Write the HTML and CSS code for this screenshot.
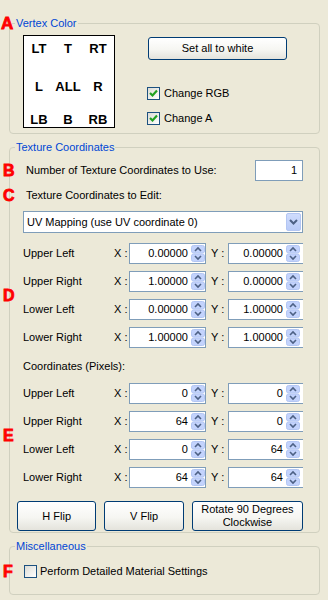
FILE: index.html
```html
<!DOCTYPE html>
<html lang="en">
<head>
    <meta charset="UTF-8">
    <meta name="viewport" content="width=device-width, initial-scale=1.0">
    <title>Material Settings</title>
    <link rel="stylesheet" href="styles.css">
</head>
<body>
    <!-- Shared icons -->
    <svg class="defs" width="0" height="0">
        <symbol id="spin" viewBox="0 0 14 17">
            <rect x="0.5" y="0.5" width="13" height="7.5" rx="2" fill="#c3d3fc" stroke="#b3c6f3"/>
            <rect x="0.5" y="9" width="13" height="7.5" rx="2" fill="#c3d3fc" stroke="#b3c6f3"/>
            <path d="M4 6 L7 3 L10 6" fill="none" stroke="#4d6185" stroke-width="1.6"/>
            <path d="M4 11 L7 14 L10 11" fill="none" stroke="#4d6185" stroke-width="1.6"/>
        </symbol>
        <symbol id="tick" viewBox="0 0 11 11">
            <path d="M2 5 L4.5 7.5 L9 2.5" fill="none" stroke="#21a121" stroke-width="2.2"/>
        </symbol>
    </svg>

    <!-- Vertex Color -->
    <fieldset class="group">
        <legend><span class="marker marker-a">A</span>Vertex Color</legend>
        <div class="vertex-body">
            <div class="corner-grid">
                <span>LT</span><span>T</span><span>RT</span>
                <span>L</span><span>ALL</span><span>R</span>
                <span>LB</span><span>B</span><span>RB</span>
            </div>
            <div class="vertex-side">
                <button class="btn btn-white">Set all to white</button>
                <label class="check check-rgb"><span class="box"><svg><use href="#tick"/></svg></span>Change RGB</label>
                <label class="check check-a"><span class="box"><svg><use href="#tick"/></svg></span>Change A</label>
            </div>
        </div>
    </fieldset>

    <!-- Texture Coordinates -->
    <fieldset class="group group-tex">
        <legend>Texture Coordinates</legend>
        <div class="tex-body">
            <div class="field-row">
                <span class="marker marker-row">B</span>
                <span>Number of Texture Coordinates to Use:</span>
                <span class="num-input">1</span>
            </div>
            <div class="field-row edit-row">
                <span class="marker marker-row">C</span>
                <span>Texture Coordinates to Edit:</span>
            </div>
            <div class="select">
                <span>UV Mapping (use UV coordinate 0)</span>
                <span class="select-btn">
                    <svg width="9" height="6" viewBox="0 0 9 6"><path d="M1 1 L4.5 4.5 L8 1" fill="none" stroke="#4d6185" stroke-width="2"/></svg>
                </span>
            </div>

            <div class="coord-block">
                <span class="marker marker-row">D</span>
                <div class="coord-row">
                    <span class="coord-name">Upper Left</span>
                    <span class="axis">X :</span>
                    <div class="spin"><span class="spin-val">0.00000</span><svg class="spin-ico"><use href="#spin"/></svg></div>
                    <span class="axis axis-y">Y :</span>
                    <div class="spin spin-y"><span class="spin-val">0.00000</span><svg class="spin-ico"><use href="#spin"/></svg></div>
                </div>
                <div class="coord-row">
                    <span class="coord-name">Upper Right</span>
                    <span class="axis">X :</span>
                    <div class="spin"><span class="spin-val">1.00000</span><svg class="spin-ico"><use href="#spin"/></svg></div>
                    <span class="axis axis-y">Y :</span>
                    <div class="spin spin-y"><span class="spin-val">0.00000</span><svg class="spin-ico"><use href="#spin"/></svg></div>
                </div>
                <div class="coord-row">
                    <span class="coord-name">Lower Left</span>
                    <span class="axis">X :</span>
                    <div class="spin"><span class="spin-val">0.00000</span><svg class="spin-ico"><use href="#spin"/></svg></div>
                    <span class="axis axis-y">Y :</span>
                    <div class="spin spin-y"><span class="spin-val">1.00000</span><svg class="spin-ico"><use href="#spin"/></svg></div>
                </div>
                <div class="coord-row">
                    <span class="coord-name">Lower Right</span>
                    <span class="axis">X :</span>
                    <div class="spin"><span class="spin-val">1.00000</span><svg class="spin-ico"><use href="#spin"/></svg></div>
                    <span class="axis axis-y">Y :</span>
                    <div class="spin spin-y"><span class="spin-val">1.00000</span><svg class="spin-ico"><use href="#spin"/></svg></div>
                </div>
            </div>

            <div class="pixels-title">Coordinates (Pixels):</div>

            <div class="coord-block coord-block-px">
                <span class="marker marker-row">E</span>
                <div class="coord-row">
                    <span class="coord-name">Upper Left</span>
                    <span class="axis">X :</span>
                    <div class="spin"><span class="spin-val">0</span><svg class="spin-ico"><use href="#spin"/></svg></div>
                    <span class="axis axis-y">Y :</span>
                    <div class="spin spin-y"><span class="spin-val">0</span><svg class="spin-ico"><use href="#spin"/></svg></div>
                </div>
                <div class="coord-row">
                    <span class="coord-name">Upper Right</span>
                    <span class="axis">X :</span>
                    <div class="spin"><span class="spin-val">64</span><svg class="spin-ico"><use href="#spin"/></svg></div>
                    <span class="axis axis-y">Y :</span>
                    <div class="spin spin-y"><span class="spin-val">0</span><svg class="spin-ico"><use href="#spin"/></svg></div>
                </div>
                <div class="coord-row">
                    <span class="coord-name">Lower Left</span>
                    <span class="axis">X :</span>
                    <div class="spin"><span class="spin-val">0</span><svg class="spin-ico"><use href="#spin"/></svg></div>
                    <span class="axis axis-y">Y :</span>
                    <div class="spin spin-y"><span class="spin-val">64</span><svg class="spin-ico"><use href="#spin"/></svg></div>
                </div>
                <div class="coord-row">
                    <span class="coord-name">Lower Right</span>
                    <span class="axis">X :</span>
                    <div class="spin"><span class="spin-val">64</span><svg class="spin-ico"><use href="#spin"/></svg></div>
                    <span class="axis axis-y">Y :</span>
                    <div class="spin spin-y"><span class="spin-val">64</span><svg class="spin-ico"><use href="#spin"/></svg></div>
                </div>
            </div>

            <div class="btn-row">
                <button class="btn btn-flip">H Flip</button>
                <button class="btn btn-flip">V Flip</button>
                <button class="btn btn-rotate">Rotate 90 Degrees<br>Clockwise</button>
            </div>
        </div>
    </fieldset>

    <!-- Miscellaneous -->
    <fieldset class="group group-misc">
        <legend>Miscellaneous</legend>
        <div class="misc-body">
            <label class="check check-misc">
                <span class="marker marker-row">F</span>
                <span class="box"></span>Perform Detailed Material Settings
            </label>
        </div>
    </fieldset>
</body>
</html>
```

FILE: styles.css
```css
body {
    margin: 0;
    padding-top: 17px;
    background-color: #ece9d8;
    color: #000;
    font-family: "Liberation Sans", Arial, sans-serif;
    font-size: 11px;
    line-height: 13px;
}

.defs {
    position: absolute;
    width: 0;
    height: 0;
}

/* Group boxes */
.group {
    margin: 0 8px 0 9px;
    padding: 0;
    min-width: 0;
    border: 1px solid #d0d0bf;
    border-radius: 4px;
}

.group-tex,
.group-misc {
    margin-top: 7px;
}

legend {
    position: relative;
    margin-left: 5px;
    padding: 0 1px;
    color: #0046d5;
    line-height: 13px;
}

/* Red annotation letters */
.marker {
    position: absolute;
    color: #ff0000;
    font-family: "Liberation Sans", Arial, sans-serif;
    font-weight: bold;
    font-size: 16px;
    line-height: 16px;
    -webkit-text-stroke: 0.8px #ff0000;
}

.marker-a {
    left: -14px;
    top: -1px;
    font-size: 17px;
}

.marker-row {
    left: -20px;
    top: 50%;
    transform: translateY(-50%);
}

/* Vertex color */
.vertex-body {
    display: flex;
    padding: 5px 0 5px 13px;
}

.corner-grid {
    width: 92px;
    height: 93px;
    box-sizing: border-box;
    border: 1px solid #000;
    background-color: #fff;
    display: grid;
    grid-template-columns: 30px 28px 32px;
    grid-template-rows: 24px 52px 15px;
    align-items: center;
    text-align: center;
    font-weight: bold;
    font-size: 13px;
}

.vertex-side {
    display: flex;
    flex-direction: column;
    align-items: flex-start;
    margin-left: 32px;
}

/* Buttons */
.btn {
    font-family: inherit;
    font-weight: normal;
    font-size: 11px;
    line-height: 13px;
    color: #000;
    padding: 0;
    border: 1px solid #003c74;
    border-radius: 3px;
    background: linear-gradient(#ffffff, #f6f6f2 55%, #e4e3dc);
    box-sizing: border-box;
}

.btn-white {
    width: 139px;
    height: 23px;
    margin: 2px 0 0 1px;
}

/* Checkboxes */
.check {
    position: relative;
    display: flex;
    align-items: center;
    gap: 4px;
    height: 13px;
}

.check-rgb {
    margin-top: 27px;
}

.check-a {
    margin-top: 12px;
}

.box {
    width: 13px;
    height: 13px;
    box-sizing: border-box;
    border: 1px solid #1c5180;
    background: linear-gradient(135deg, #dcdcd5, #ffffff);
}

.box svg {
    display: block;
    width: 11px;
    height: 11px;
}

/* Texture coordinates */
.tex-body {
    padding: 6px 16px 1px 13px;
}

.field-row {
    position: relative;
    display: flex;
    justify-content: space-between;
    align-items: center;
    padding-left: 3px;
}

.num-input {
    width: 48px;
    height: 21px;
    box-sizing: border-box;
    border: 1px solid #7f9db9;
    background-color: #fff;
    text-align: right;
    padding-right: 5px;
    line-height: 19px;
}

.edit-row {
    margin-top: 8px;
}

.select {
    display: flex;
    justify-content: space-between;
    align-items: center;
    height: 22px;
    margin-top: 9px;
    box-sizing: border-box;
    border: 1px solid #7f9db9;
    background-color: #fff;
    padding: 1px 1px 1px 3px;
}

.select-btn {
    width: 15px;
    height: 18px;
    box-sizing: border-box;
    border: 1px solid #b3c6f3;
    border-radius: 2px;
    background: linear-gradient(#cfdcfd, #b9cbf8);
    display: flex;
    align-items: center;
    justify-content: center;
}

.coord-block {
    position: relative;
    display: flex;
    flex-direction: column;
    gap: 7px;
    margin-top: 10px;
}

.coord-row {
    display: flex;
    align-items: center;
    height: 21px;
}

.coord-name {
    width: 92px;
}

.axis {
    width: 15px;
}

.axis-y {
    width: 17px;
    padding-left: 5px;
}

.spin {
    display: flex;
    align-items: center;
    width: 78px;
    height: 21px;
    box-sizing: border-box;
    border: 1px solid #7f9db9;
    background-color: #fff;
}

.spin-y {
    width: 76px;
    border-right: none;
    padding-right: 3px;
}

.spin-val {
    flex: 1;
    text-align: right;
    padding-right: 3px;
}

.spin-ico {
    width: 14px;
    height: 17px;
}

.pixels-title {
    margin-top: 12px;
}

.btn-row {
    display: flex;
    gap: 8px;
    margin: 13px 0 0 -6px;
}

.btn-flip {
    width: 80px;
    height: 30px;
}

.btn-rotate {
    width: 112px;
    height: 30px;
}

/* Miscellaneous */
.misc-body {
    padding: 12px 0 16px 14px;
}

.check-misc {
    gap: 3px;
}

.check-misc .marker-row {
    left: -21px;
}
```
